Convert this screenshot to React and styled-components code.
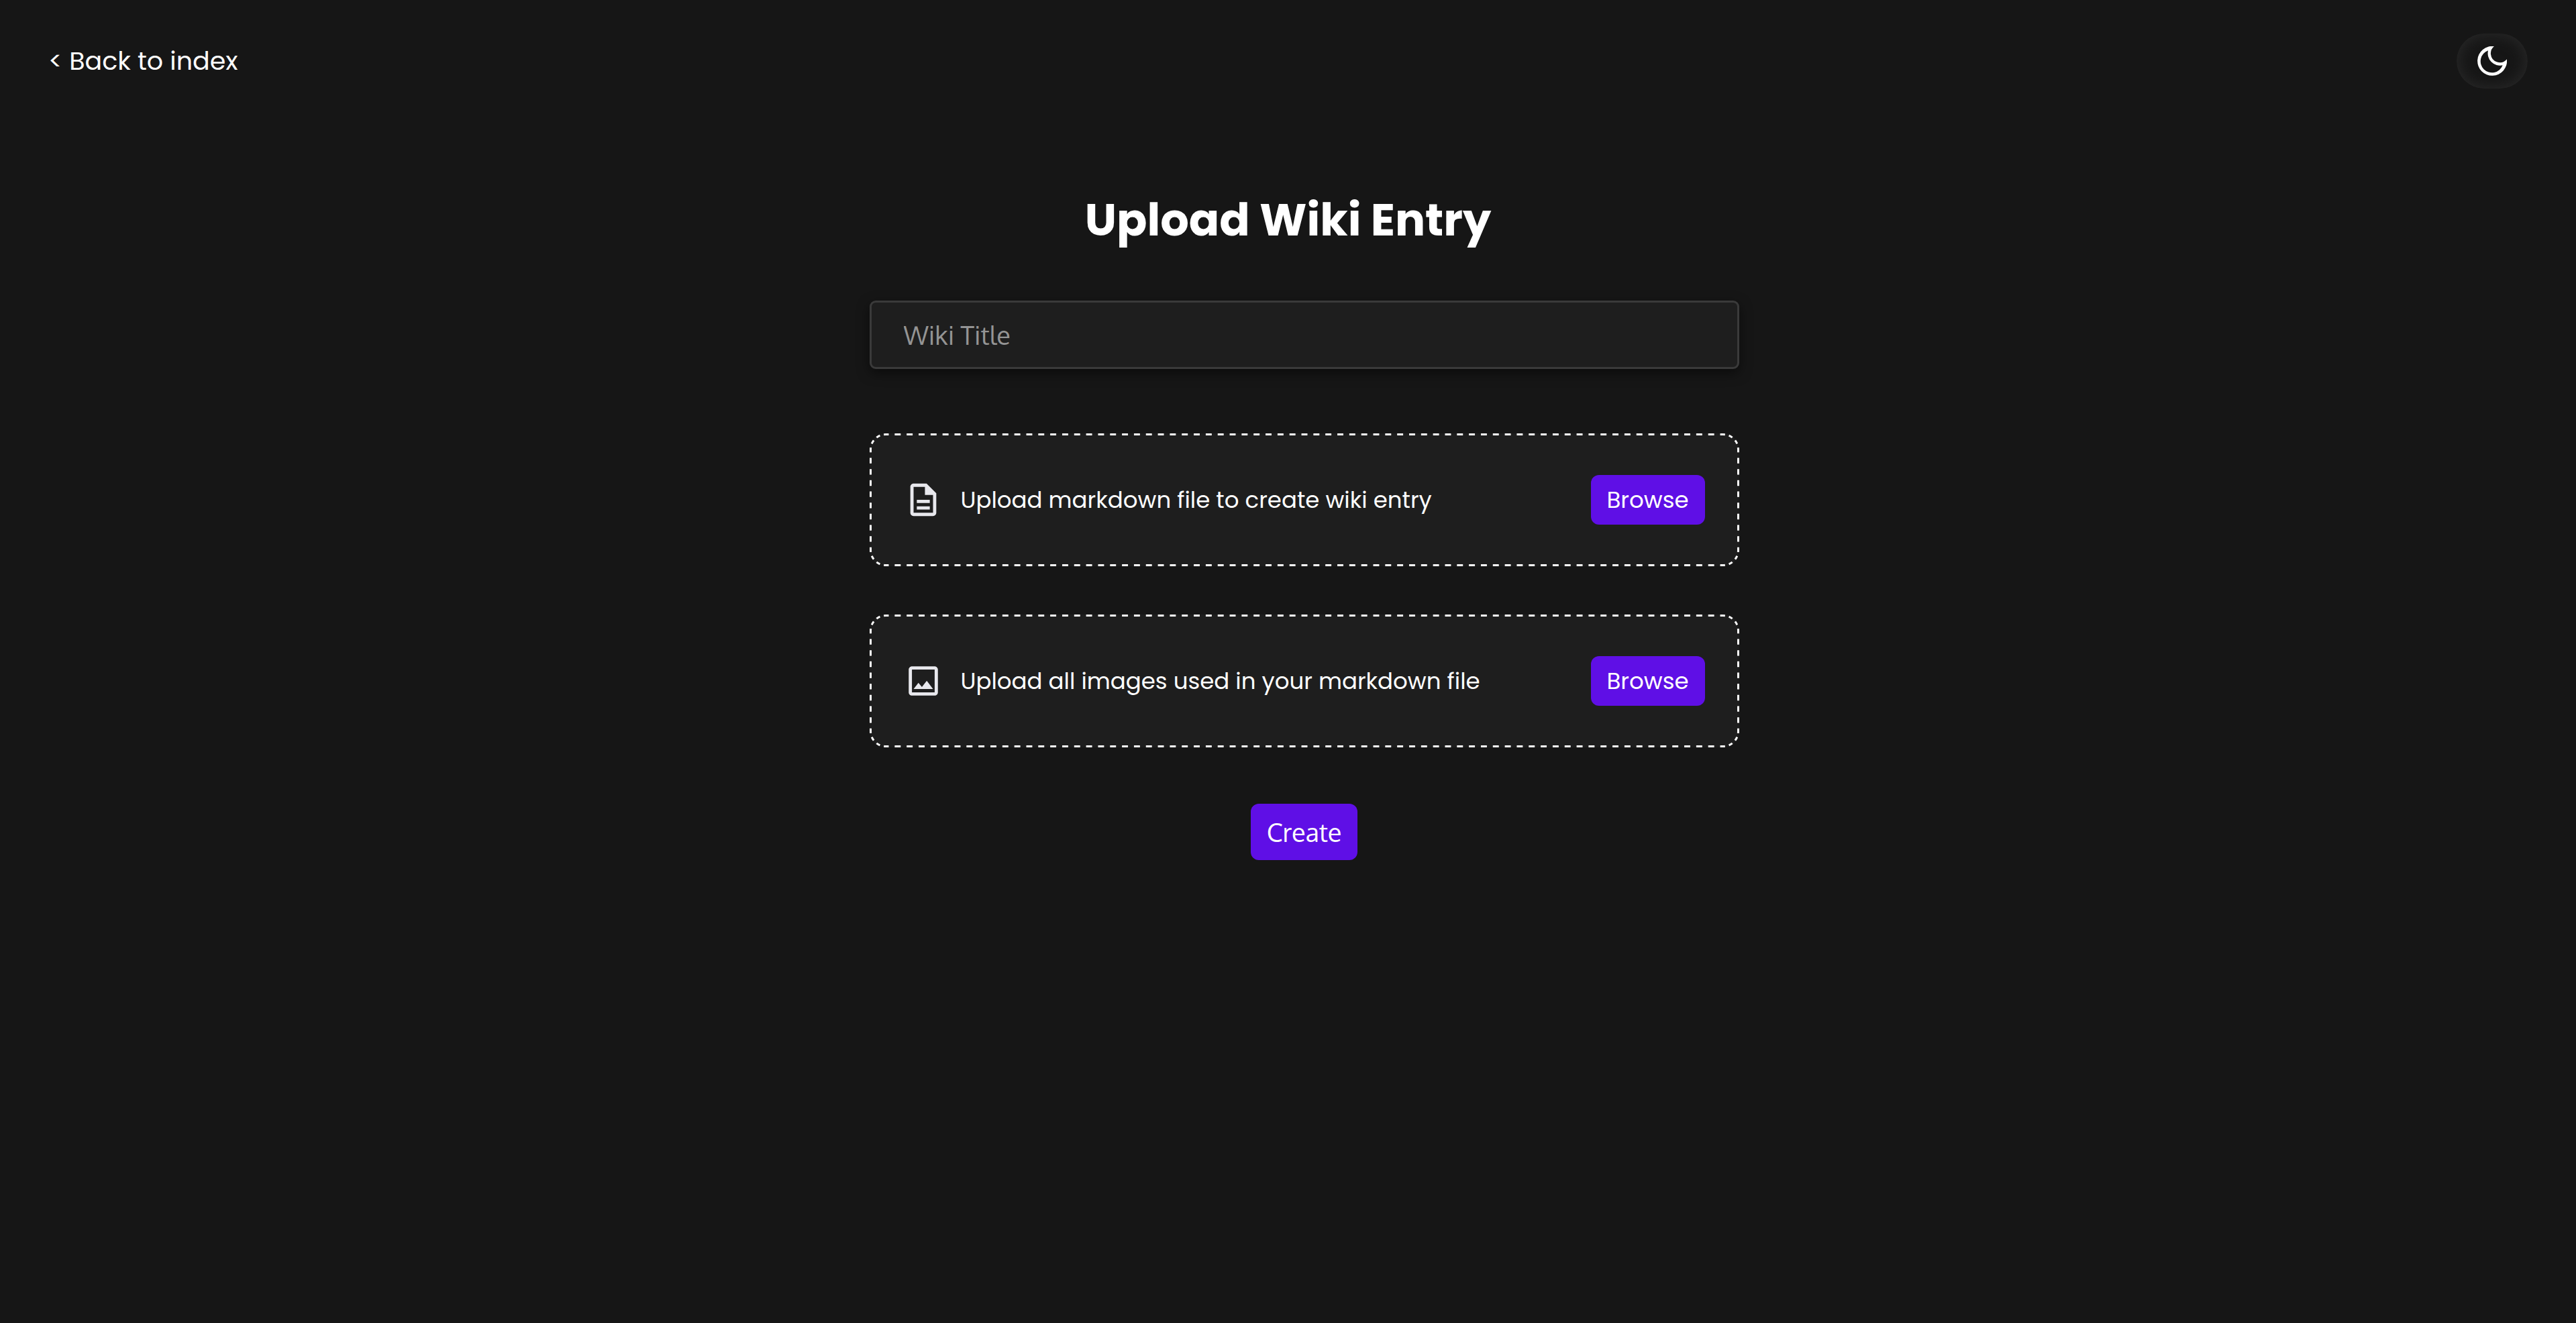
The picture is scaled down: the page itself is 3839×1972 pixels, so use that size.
import React from "react";
import styled, { createGlobalStyle } from "styled-components";
import { MdOutlineDescription, MdOutlineImage } from "react-icons/md";

const bodyFont = `Poppins, Inter, "Open Sans", sans-serif`;
const controlFont = `Oxygen, "Noto Sans", "Open Sans", sans-serif`;

const GlobalStyle = createGlobalStyle`
  *, *::before, *::after { box-sizing: border-box; }
  body {
    margin: 0;
    background: #161616;
    color: #fff;
    font-family: ${bodyFont};
  }
`;

const Page = styled.div`
  min-height: 100vh;
  background: #161616;
`;

const Header = styled.header`
  display: flex;
  align-items: center;
  justify-content: space-between;
  padding: 50px 72px 0;
`;

const BackLink = styled.a`
  color: #fff;
  font-size: 38px;
  line-height: 60px;
  text-decoration: none;
`;

const ThemeToggle = styled.button`
  display: flex;
  align-items: center;
  justify-content: center;
  width: 106px;
  height: 82px;
  padding: 0;
  border: 0;
  border-radius: 41px;
  background: #161616;
  box-shadow: inset 0 0 24px #2c2c2c;
  color: #fff;
  cursor: pointer;
`;

const Main = styled.main`
  display: flex;
  flex-direction: column;
  align-items: center;
  padding: 148px 24px 72px;
`;

const Title = styled.h1`
  margin: 0 0 72px;
  font-size: 67px;
  font-weight: 700;
  line-height: 96px;
`;

const Form = styled.form`
  display: flex;
  flex-direction: column;
  align-items: center;
  width: 100%;
  max-width: 1344px;
  padding-left: 48px;
`;

const TitleInput = styled.input`
  width: 100%;
  height: 102px;
  margin-bottom: 96px;
  padding: 0 48px;
  border: 3px solid #3a3a3a;
  border-radius: 9px;
  background: #1e1e1e;
  box-shadow: 0 6px 18px rgba(0, 0, 0, 0.5);
  color: #fff;
  font-family: ${controlFont};
  font-size: 38px;
  outline: none;

  &::placeholder {
    color: #949494;
    opacity: 1;
  }
`;

const UploadList = styled.div`
  display: flex;
  flex-direction: column;
  gap: 72px;
  width: 100%;
  margin-bottom: 84px;
`;

const UploadCard = styled.div`
  position: relative;
  display: flex;
  align-items: center;
  gap: 27px;
  padding: 62px 51px;
  border-radius: 24px;
  background: #1e1e1e;
`;

const CardIcon = styled.span`
  display: flex;
  flex: none;
  color: #e8e8ed;
`;

const DashedOutline = styled.svg`
  position: absolute;
  inset: 0;
  width: 100%;
  height: 100%;
  pointer-events: none;
`;

const UploadText = styled.span`
  flex: 1;
  font-size: 34px;
  line-height: 54px;
`;

const Button = styled.button`
  padding: ${(p) => (p.$large ? "14px 24px" : "10px 24px")};
  border: 0;
  border-radius: 12px;
  background: #5f0fe6;
  color: #fff;
  font-family: ${(p) => (p.$large ? controlFont : bodyFont)};
  font-size: ${(p) => (p.$large ? "38px" : "34px")};
  line-height: ${(p) => (p.$large ? "56px" : "54px")};
  cursor: pointer;
`;

function MoonIcon() {
  return (
    <svg width="44" height="44" viewBox="0 0 132 132" fill="currentColor" fillRule="evenodd" aria-hidden="true">
      <path d="M75 0A66 66 0 1 0 132 58A41 41 0 0 1 60 36A41 41 0 0 1 75 0ZM48 19A51 51 0 1 0 113 85A55 55 0 0 1 48 19Z" />
    </svg>
  );
}

// Each side and corner holds a whole number of dashes, starting and ending on half a dash.
function Outline() {
  const sides = [
    { d: "M24 1.5H1272", n: 70 },
    { d: "M24 196.5H1272", n: 70 },
    { d: "M1.5 24V174", n: 9 },
    { d: "M1294.5 24V174", n: 9 },
    { d: "M1.5 24A22.5 22.5 0 0 1 24 1.5", n: 3 },
    { d: "M1272 1.5A22.5 22.5 0 0 1 1294.5 24", n: 3 },
    { d: "M1294.5 174A22.5 22.5 0 0 1 1272 196.5", n: 3 },
    { d: "M24 196.5A22.5 22.5 0 0 1 1.5 174", n: 3 },
  ];
  return (
    <DashedOutline viewBox="0 0 1296 198" preserveAspectRatio="none" fill="none" stroke="#fff" strokeWidth="3" aria-hidden="true">
      {sides.map(({ d, n }) => (
        <path key={d} d={d} pathLength={n} strokeDasharray="0.5 0.5" strokeDashoffset="0.25" />
      ))}
    </DashedOutline>
  );
}

const uploads = [
  { id: "markdown", Icon: MdOutlineDescription, text: "Upload markdown file to create wiki entry" },
  { id: "images", Icon: MdOutlineImage, text: "Upload all images used in your markdown file" },
];

export default function App() {
  return (
    <Page>
      <GlobalStyle />
      <Header>
        <BackLink href="#index">&lt; Back to index</BackLink>
        <ThemeToggle type="button" aria-label="Toggle theme">
          <MoonIcon />
        </ThemeToggle>
      </Header>
      <Main>
        <Title>Upload Wiki Entry</Title>
        <Form onSubmit={(e) => e.preventDefault()}>
          <TitleInput type="text" name="title" placeholder="Wiki Title" aria-label="Wiki Title" />
          <UploadList>
            {uploads.map(({ id, Icon, text }) => (
              <UploadCard key={id}>
                <Outline />
                <CardIcon>
                  <Icon size={58} aria-hidden="true" />
                </CardIcon>
                <UploadText id={id}>{text}</UploadText>
                <Button type="button" aria-describedby={id}>Browse</Button>
              </UploadCard>
            ))}
          </UploadList>
          <Button type="submit" $large>Create</Button>
        </Form>
      </Main>
    </Page>
  );
}
